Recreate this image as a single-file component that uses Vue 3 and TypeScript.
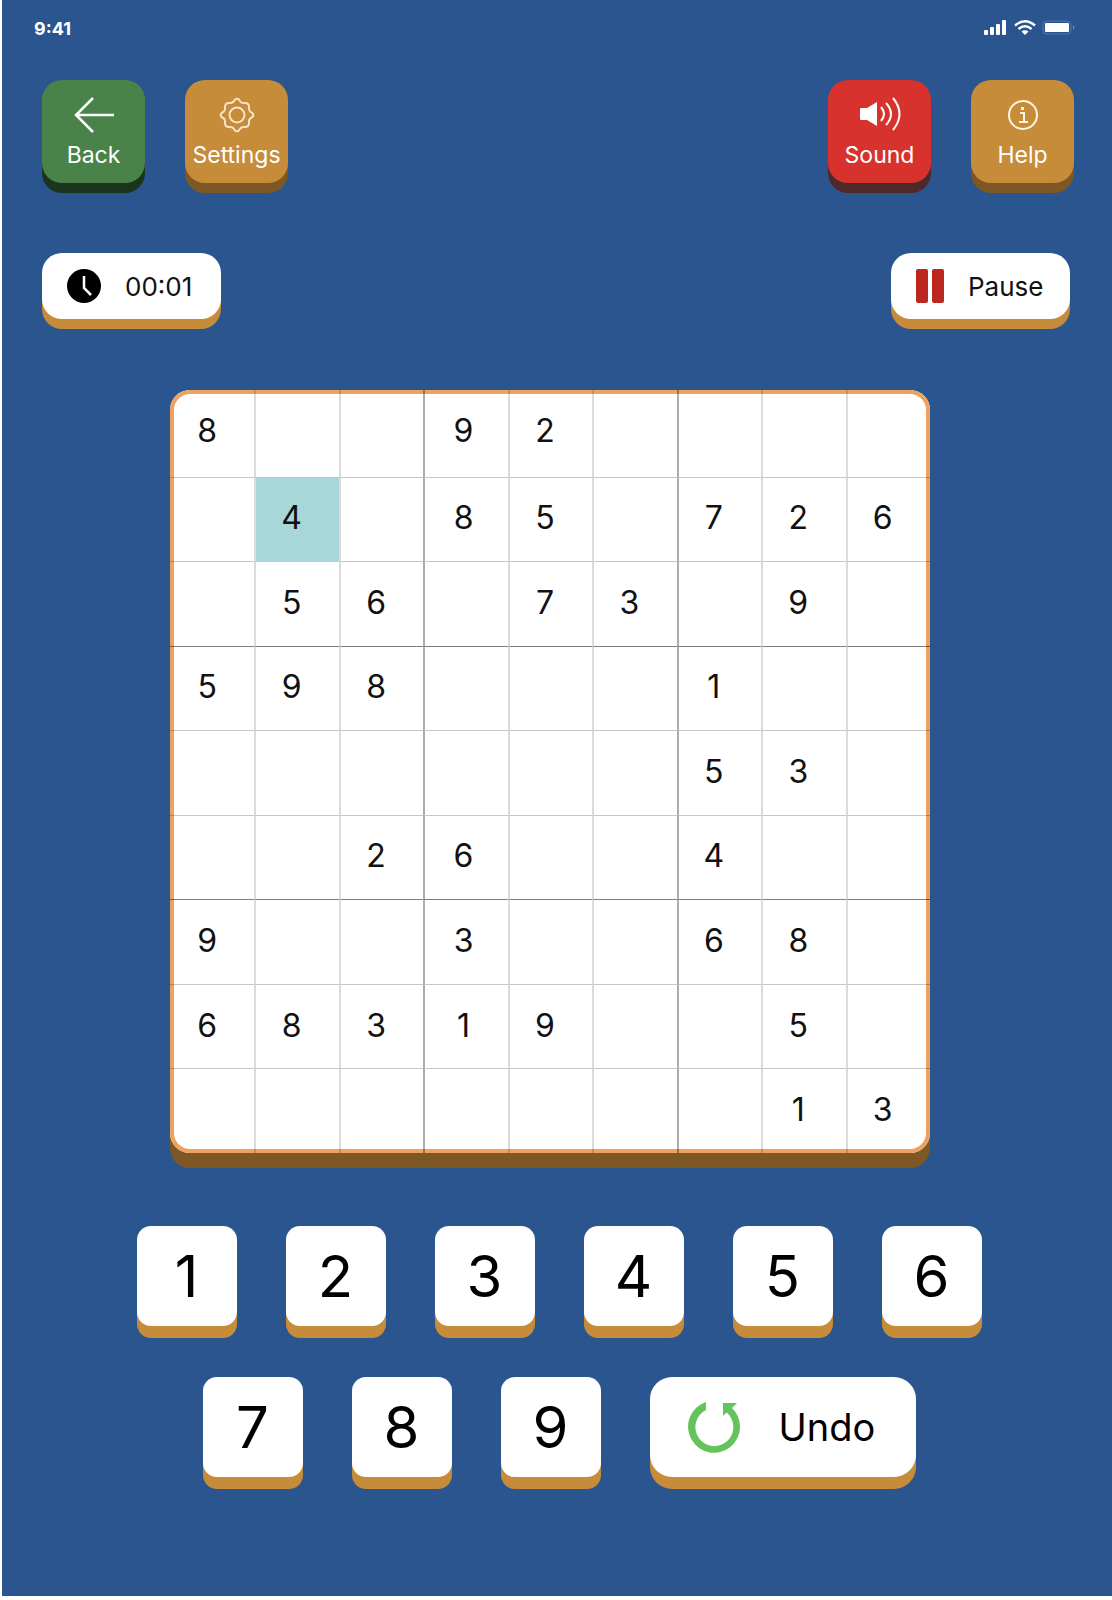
<script setup lang="ts">
import { computed, ref } from 'vue'

interface Position {
  row: number
  col: number
}

const start: string[] = [
  '8..92....',
  '.4.85.726',
  '.56.73.9.',
  '598...1..',
  '......53.',
  '..26..4..',
  '9..3..68.',
  '68319..5.',
  '.......13',
]

const grid = ref<string[][]>(start.map((line) => line.split('').map((c) => (c === '.' ? '' : c))))
const selected = ref<Position>({ row: 1, col: 1 })
const history = ref<{ at: Position; value: string }[]>([])
const seconds = ref(1)

const clock = computed(() => {
  const pad = (n: number) => String(n).padStart(2, '0')
  return `${pad(Math.floor(seconds.value / 60))}:${pad(seconds.value % 60)}`
})

function select(row: number, col: number) {
  selected.value = { row, col }
}

function enter(n: number) {
  const { row, col } = selected.value
  history.value.push({ at: { row, col }, value: grid.value[row][col] })
  grid.value[row][col] = String(n)
}

function undo() {
  const last = history.value.pop()
  if (last) grid.value[last.at.row][last.at.col] = last.value
}
</script>

<template>
  <div class="screen">
    <div class="status">
      <span class="time">9:41</span>
      <svg class="signals" viewBox="0 0 94 18" aria-hidden="true">
        <g fill="#fff">
          <rect x="2" y="11" width="4" height="5" rx="1" />
          <rect x="8" y="8" width="4" height="8" rx="1" />
          <rect x="14" y="5" width="4" height="11" rx="1" />
          <rect x="20" y="1" width="4" height="15" rx="1" />
          <rect x="63" y="4" width="24" height="9" rx="1" />
        </g>
        <g fill="none" stroke="#fff" stroke-width="2.500">
          <path d="M33 6.500 Q43 -2 53 6.500" />
          <path d="M36.500 10 Q43 4.500 49.500 10" />
        </g>
        <path d="M39.500 12.500 Q43 10 46.500 12.500 L43 16z" fill="#fff" />
        <rect x="61" y="2" width="28" height="13" rx="4" fill="none" stroke="#fff" stroke-opacity="0.200" />
        <path d="M91 6 Q94 8.500 91 11z" fill="#fff" fill-opacity="0.300" />
      </svg>
    </div>

    <nav class="toolbar" aria-label="Game menu">
      <div class="group">
        <button type="button" class="tile green">
          <svg viewBox="-22 -20 44 40" aria-hidden="true">
            <path d="M20 0 H-18 M-1 -17 L-18 0 L-1 17" fill="none" stroke="#fff" stroke-width="2.500" />
          </svg>
          Back
        </button>
        <button type="button" class="tile amber">
          <svg viewBox="-22 -20 44 40" aria-hidden="true">
            <g fill="none" stroke="#f7e3c6" stroke-width="2">
              <path
                d="M2 -15.500C3 -13 5 -11.500 8 -12Q12 -12 12 -8C11.500 -5 13 -3 15.500 -2Q17 0 15.500 2C13 3 11.500 5 12 8Q12 12 8 12C5 11.500 3 13 2 15.500Q0 17 -2 15.500C-3 13 -5 11.500 -8 12Q-12 12 -12 8C-11.500 5 -13 3 -15.500 2Q-17 0 -15.500 -2C-13 -3 -11.500 -5 -12 -8Q-12 -12 -8 -12C-5 -11.500 -3 -13 -2 -15.500Q0 -17 2 -15.500Z"
              />
              <circle r="7.500" />
            </g>
          </svg>
          Settings
        </button>
      </div>
      <div class="group">
        <button type="button" class="tile red">
          <svg viewBox="-22 -20 44 40" aria-hidden="true">
            <path d="M-20 -6 Q-20 -7 -19 -7 H-13 L-3 -13 V11 L-13 5 H-19 Q-20 5 -20 4Z" fill="#fff" />
            <g fill="none" stroke="#fff" stroke-width="2">
              <path d="M1 -8 Q7 -1 1 6" />
              <path d="M6 -12 Q16 -1 6 10" />
              <path d="M13 -17 Q26 -1 13 15" />
            </g>
          </svg>
          Sound
        </button>
        <button type="button" class="tile amber">
          <svg viewBox="-22 -20 44 40" aria-hidden="true">
            <circle r="14" fill="none" stroke="#fff5e6" stroke-width="2" />
            <rect x="-2" y="-8" width="3" height="3" fill="#fff5e6" />
            <path d="M-3 -2 H1 V7 M-4 7 H5" fill="none" stroke="#fff5e6" stroke-width="2" />
          </svg>
          Help
        </button>
      </div>
    </nav>

    <div class="infobar">
      <div class="pill" role="timer">
        <svg viewBox="0 0 34 34" aria-hidden="true">
          <circle cx="17" cy="17" r="17" />
          <path d="M17 7 V19 L24 26" fill="none" stroke="#fff" stroke-width="2.500" />
        </svg>
        {{ clock }}
      </div>
      <button type="button" class="pill">
        <svg class="bars" viewBox="0 0 28 34" aria-hidden="true">
          <g fill="#bb271e">
            <rect x="0" y="0" width="12" height="34" rx="2" />
            <rect x="16" y="0" width="12" height="34" rx="2" />
          </g>
        </svg>
        Pause
      </button>
    </div>

    <main class="game">
      <div class="board">
        <table aria-label="Sudoku board">
          <tbody>
            <tr v-for="(line, r) in grid" :key="r">
              <td
                v-for="(value, c) in line"
                :key="c"
                :class="{ selected: selected.row === r && selected.col === c }"
                @click="select(r, c)"
              >{{ value }}</td>
            </tr>
          </tbody>
        </table>
      </div>

      <div class="keypad">
        <div class="keys">
          <button v-for="n in 6" :key="n" type="button" class="key" @click="enter(n)">{{ n }}</button>
        </div>
        <div class="keys">
          <button v-for="n in [7, 8, 9]" :key="n" type="button" class="key" @click="enter(n)">{{ n }}</button>
          <button type="button" class="key undo" @click="undo">
            <svg viewBox="-27 -27 54 54" aria-hidden="true">
              <g fill="#65c35c">
                <path d="M-8 -25 A26 26 0 1 0 17 -20 L12 -15 A19 19 0 1 1 -8 -17Z" />
                <path d="M9 -24 H23 L18 -19 L19 -14 L13 -15 L9 -11Z" />
              </g>
            </svg>
            Undo
          </button>
        </div>
      </div>
    </main>
  </div>
</template>

<style>
body {
  margin: 0;
  background: #fff;
}
</style>

<style scoped>
.screen {
  box-sizing: border-box;
  min-height: calc(100vh - 4px);
  margin-left: 2px;
  padding-bottom: 96px;
  background: #2b558f;
  color: #111;
  font-family: Inter, 'Noto Sans', sans-serif;
}

button {
  border: 0;
  font: inherit;
  color: inherit;
  cursor: pointer;
}

.status {
  display: flex;
  align-items: center;
  justify-content: space-between;
  height: 56px;
  padding: 0 36px 0 32px;
}

.time {
  color: #fff;
  font-size: 18px;
  font-weight: 700;
}

.signals {
  width: 94px;
  height: 18px;
}

.toolbar {
  display: flex;
  justify-content: space-between;
  padding: 24px 38px 0 40px;
}

.group {
  display: flex;
  gap: 40px;
}

.tile {
  display: flex;
  flex-direction: column;
  align-items: center;
  box-sizing: border-box;
  width: 103px;
  height: 103px;
  padding: 15px 0 0;
  border-radius: 20px;
  color: #fff;
  font-size: 23px;
  line-height: 40px;
}

.tile svg {
  flex: none;
  width: 44px;
  height: 40px;
}

.green {
  background: #498349;
  box-shadow: 0 10px #1c331c;
}

.amber {
  background: #c68c39;
  box-shadow: 0 10px #7e5824;
}

.red {
  background: #d7322d;
  box-shadow: 0 10px #4f2929;
}

.infobar {
  display: flex;
  justify-content: space-between;
  padding: 70px 42px 0 40px;
}

.pill {
  display: flex;
  align-items: center;
  gap: 24px;
  box-sizing: border-box;
  width: 179px;
  height: 66px;
  padding: 0 0 0 25px;
  border-radius: 20px;
  background: #fff;
  box-shadow: 0 10px #c68c39;
  font-size: 26px;
}

.pill svg {
  flex: none;
  width: 34px;
  height: 34px;
}

.pill .bars {
  width: 28px;
}

.game {
  display: flex;
  flex-direction: column;
  align-items: center;
  gap: 73px;
  padding: 71px 38px 0 42px;
}

.board {
  width: 100%;
  max-width: 760px;
  aspect-ratio: 760 / 763;
  margin-right: 18px;
  border-radius: 20px;
  background: #fff;
  box-shadow: inset 0 0 0 4px #eda35f, 0 15px #7e5824;
}

table {
  width: 100%;
  height: 100%;
  table-layout: fixed;
  border-collapse: separate;
  border-spacing: 0;
}

td {
  padding: 0 12px 2px 0;
  border-top: 1px solid rgba(0, 0, 0, 0.22);
  border-left: 2px solid rgba(0, 0, 0, 0.14);
  font-size: 32px;
  line-height: 40px;
  text-align: center;
  cursor: pointer;
}

td:nth-child(3n + 1) {
  border-left-color: rgba(0, 0, 0, 0.32);
}

tr:nth-child(3n + 1) td {
  border-top-color: rgba(0, 0, 0, 0.5);
}

td:first-child {
  padding-right: 10px;
  border-left: 0;
}

td:nth-child(4) {
  padding-right: 6px;
}

tr:first-child td {
  border-top: 0;
  padding-bottom: 4px;
}

.selected {
  background: #a8d7d9;
  background-clip: padding-box;
}

.keypad {
  display: flex;
  flex-direction: column;
  gap: 51px;
}

.keys {
  display: flex;
  flex-wrap: wrap;
  justify-content: center;
  gap: 49px;
}

.key {
  width: 100px;
  height: 100px;
  padding: 0;
  border-radius: 14px;
  background: #fff;
  box-shadow: 0 12px #c68c39;
  color: #000;
  font-size: 58px;
  line-height: 100px;
}

.undo {
  display: flex;
  align-items: center;
  gap: 38px;
  width: 266px;
  padding-left: 37px;
  border-radius: 22px;
  font-size: 38px;
}

.undo svg {
  width: 54px;
  height: 54px;
}
</style>
